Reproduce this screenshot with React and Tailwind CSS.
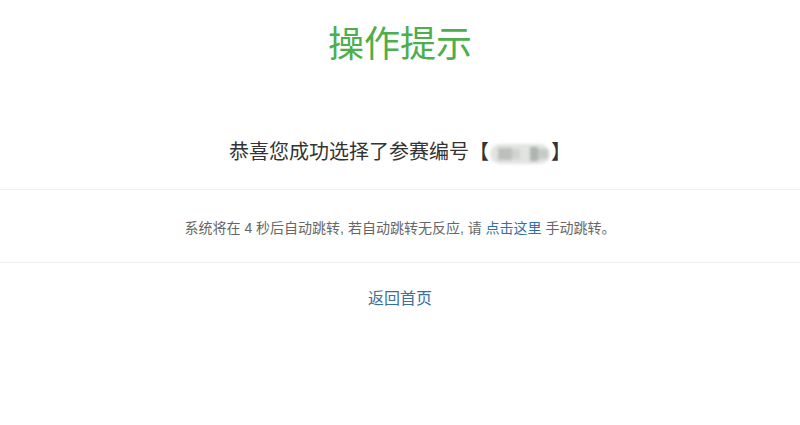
import React from 'react';

const FONT = { fontFamily: '"Liberation Sans", "Noto Sans CJK SC", sans-serif' };

function BlurredCode() {
  return (
    <span className="inline-flex items-center align-middle mx-[1px] h-[20px] w-[60px] rounded-full bg-[#e2e4e2] blur-[1.5px] overflow-hidden">
      <span className="ml-[8px] h-[12px] w-[14px] bg-[#bcc0bc]" />
      <span className="h-[10px] w-[8px] bg-[#d0d3d0]" />
      <span className="ml-[10px] h-[14px] w-[8px] bg-[#aeb3ae]" />
      <span className="h-[10px] w-[10px] bg-[#c6cac6]" />
    </span>
  );
}

export default function App() {
  return (
    <div className="w-[800px] h-[425px] bg-white text-center" style={FONT}>
      <div className="h-[90px] flex items-center justify-center">
        <h1 className="text-[36px] leading-[46px] text-[#4cae4c] font-normal">操作提示</h1>
      </div>

      <div className="pt-[48px] pb-[23px] border-b border-[#eeeeee]">
        <p className="text-[20px] leading-[28px] text-[#333333]">
          恭喜您成功选择了参赛编号【<BlurredCode />】
        </p>
      </div>

      <div className="pt-[28px] pb-[24px] border-b border-[#eeeeee]">
        <p className="text-[14px] leading-[20px] text-[#666666]">
          系统将在 4 秒后自动跳转, 若自动跳转无反应, 请{' '}
          <a href="#" className="text-[#3071a9]">点击这里</a>{' '}
          手动跳转。
        </p>
      </div>

      <div className="pt-[24px]">
        <a href="#" className="text-[16px] leading-[24px] text-[#3a6f9c]">返回首页</a>
      </div>
    </div>
  );
}
